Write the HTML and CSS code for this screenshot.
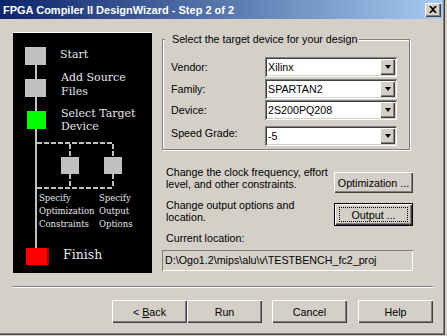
FILE: index.html
```html
<!DOCTYPE html>
<html lang="en">
  <head>
    <meta charset="UTF-8" />
    <title>FPGA Compiler II DesignWizard - Step 2 of 2</title>
    <link rel="stylesheet" href="styles.css">
  </head>
  <body>
    <div class="window">
      <div class="frame">
        <div class="titlebar">
          <span class="title">FPGA Compiler II DesignWizard - Step 2 of 2</span>
          <div class="close">
            <svg width="8" height="7" viewBox="0 0 8 7">
              <path d="M0 0h2l2 2 2-2h2L5 3.5 8 7H6L4 5 2 7H0l3-3.5z" fill="#000" />
            </svg>
          </div>
        </div>

        <div class="content">
          <!-- Wizard steps -->
          <div class="flow">
            <svg width="139" height="240" viewBox="0 0 139 240">
              <g fill="#c0c0c0">
                <rect x="12" y="14" width="21" height="18" />
                <rect x="12" y="46" width="21" height="18" />
                <rect x="48" y="124" width="18" height="17" />
                <rect x="91" y="124" width="18" height="17" />
                <rect x="22" y="31" width="2" height="184" />
              </g>
              <rect x="14" y="78" width="19" height="18" fill="#00ff00" />
              <rect x="13" y="215" width="22" height="17" fill="#ff0000" />
              <rect x="34" y="215" width="2" height="17" fill="#a00000" />
              <g stroke="#c0c0c0" stroke-width="2" stroke-dasharray="5 2" fill="none">
                <path d="M24 110H100" />
                <path d="M57 111V124M100 111V124" />
                <path d="M57 141V155M100 141V155" />
                <path d="M24 155H100" />
              </g>
              <g class="step">
                <text x="47" y="25">Start</text>
                <text x="48" y="48">Add Source</text>
                <text x="48" y="62">Files</text>
                <text x="48" y="84">Select Target</text>
                <text x="48" y="97">Device</text>
              </g>
              <g class="sub">
                <text x="26" y="168">Specify</text>
                <text x="26" y="181">Optimization</text>
                <text x="26" y="194">Constraints</text>
                <text x="86" y="168">Specify</text>
                <text x="86" y="181">Output</text>
                <text x="86" y="194">Options</text>
              </g>
              <text class="finish" x="50" y="226">Finish</text>
            </svg>
          </div>

          <div class="side">
            <div class="group">
              <div class="legend">Select the target device for your design</div>
              <div class="field-row vendor">
                <span class="label">Vendor:</span>
                <div class="combo"><span>Xilinx</span><div class="drop"></div></div>
              </div>
              <div class="field-row family">
                <span class="label">Family:</span>
                <div class="combo"><span>SPARTAN2</span><div class="drop"></div></div>
              </div>
              <div class="field-row device">
                <span class="label">Device:</span>
                <div class="combo"><span>2S200PQ208</span><div class="drop"></div></div>
              </div>
              <div class="field-row speed">
                <span class="label">Speed Grade:</span>
                <div class="combo"><span>-5</span><div class="drop"></div></div>
              </div>
            </div>

            <div class="option-row first">
              <p>Change the clock frequency, effort<br>level, and other constraints.</p>
              <div class="btn opt-btn">Optimization ...</div>
            </div>
            <div class="option-row second">
              <p>Change output options and<br>location.</p>
              <div class="btn default-btn"><span class="focus">Output ...</span></div>
            </div>
            <p class="loc-label">Current location:</p>
            <div class="location">D:\Ogo1.2\mips\alu\v\TESTBENCH_fc2_proj</div>
          </div>
        </div>

        <div class="separator"></div>

        <div class="buttons">
          <div class="btn"><span>&lt; <u>B</u>ack</span></div>
          <div class="btn">Run</div>
          <div class="btn gap">Cancel</div>
          <div class="btn gap">Help</div>
        </div>
      </div>
    </div>
  </body>
</html>
```

FILE: styles.css
```css
* {
  margin: 0;
  padding: 0;
  box-sizing: border-box;
}

body {
  width: 447px;
  height: 336px;
  overflow: hidden;
  background: #d4d0c8;
  font-family: 'Liberation Sans', Arial, sans-serif;
  font-size: 10.7px;
  color: #000;
}

/* Window frame */
.window {
  width: 445px;
  height: 335px;
  border-right: 1px solid #404040;
  border-bottom: 1px solid #404040;
}

.frame {
  height: 100%;
  border-right: 1px solid #808080;
  border-bottom: 1px solid #808080;
}

.titlebar {
  height: 19px;
  display: flex;
  align-items: center;
  justify-content: space-between;
  padding: 0 2px 0 3px;
  background: linear-gradient(to right, #0a246a, #a6caf0);
}

.title {
  color: #fff;
  font-weight: bold;
  font-size: 11px;
}

.close {
  width: 16px;
  height: 14px;
  display: flex;
  align-items: center;
  justify-content: center;
  background: #d4d0c8;
  box-shadow: inset 1px 1px #fff, inset -1px -1px #404040, inset -2px -2px #808080;
}

/* Main area */
.content {
  display: flex;
  padding: 13px 0 0 13px;
  height: 254px;
}

.flow {
  width: 139px;
  height: 241px;
  background: #000;
  border-top: 1px solid #fff;
}

.flow svg {
  display: block;
}

.step text {
  font-family: 'DejaVu Serif', serif;
  font-size: 11px;
  fill: #e6e6e6;
}

.sub text {
  font-family: 'DejaVu Serif', serif;
  font-size: 8.5px;
  fill: #e6e6e6;
}

.finish {
  font-family: 'DejaVu Serif', serif;
  font-size: 12.5px;
  fill: #e6e6e6;
}

.side {
  width: 252px;
  margin-left: 10px;
}

/* Group box */
.group {
  margin-top: 7px;
  width: 248px;
  height: 111px;
  border: 1px solid #808080;
  box-shadow: 1px 1px #fff, inset 1px 1px #fff;
  padding: 0 0 0 8px;
}

.legend {
  margin: -8px 0 0 -6px;
  width: fit-content;
  padding: 0 2px 0 7px;
  line-height: 14px;
  background: #d4d0c8;
}

.field-row {
  display: flex;
  align-items: center;
  height: 20px;
}

.vendor {
  margin-top: 11px;
}

.family {
  margin-top: 2px;
}

.device {
  margin-top: 1px;
}

.speed {
  margin-top: 6px;
}

.speed .label {
  margin-bottom: 6px;
}

.label {
  width: 94px;
}

.combo {
  width: 132px;
  height: 20px;
  display: flex;
  align-items: center;
  justify-content: space-between;
  background: #fff;
  padding: 2px 2px 2px 3px;
  box-shadow: inset 1px 1px #808080, inset -1px -1px #fff, inset 2px 2px #404040, inset -2px -2px #d4d0c8;
}

.drop {
  width: 15px;
  height: 16px;
  background: #d4d0c8;
  box-shadow: inset 1px 1px #fff, inset -1px -1px #404040, inset -2px -2px #808080;
  display: flex;
  align-items: center;
  justify-content: center;
}

.drop::after {
  content: '';
  border-left: 3.5px solid transparent;
  border-right: 3.5px solid transparent;
  border-top: 4px solid #000;
}

/* Options */
.option-row {
  display: flex;
  justify-content: space-between;
  padding-left: 4px;
}

.option-row p {
  line-height: 12px;
}

.first {
  margin-top: 16px;
  height: 24px;
}

.first .btn {
  margin-top: 6px;
  height: 21px;
}

.second {
  margin-top: 9px;
  height: 27px;
}

.second .btn {
  margin-top: 4px;
}

.btn {
  width: 75px;
  height: 23px;
  display: flex;
  align-items: center;
  justify-content: center;
  background: #d4d0c8;
  box-shadow: inset 1px 1px #fff, inset -1px -1px #404040, inset -2px -2px #808080;
}

.opt-btn {
  width: 79px;
  margin-right: 1px;
}

.default-btn {
  width: 79px;
  margin-right: 1px;
  border: 1px solid #000;
}

.focus {
  width: 69px;
  height: 15px;
  display: flex;
  align-items: center;
  justify-content: center;
  border: 1px dotted #000;
}

.loc-label {
  margin-top: 6px;
  padding-left: 4px;
  line-height: 12px;
}

.location {
  margin-top: 6px;
  width: 251px;
  height: 21px;
  padding: 0 3px;
  line-height: 21px;
  box-shadow: inset 1px 1px #808080, inset -1px -1px #fff;
}

/* Footer */
.separator {
  margin: 13px 0 0 13px;
  width: 420px;
  border-top: 1px solid #808080;
  border-bottom: 1px solid #fff;
}

.buttons {
  display: flex;
  justify-content: flex-end;
  margin: 12px 0 0 13px;
  width: 420px;
}

.buttons .gap {
  margin-left: 10px;
}

.buttons .gap:last-child {
  margin-left: 11px;
}
```
